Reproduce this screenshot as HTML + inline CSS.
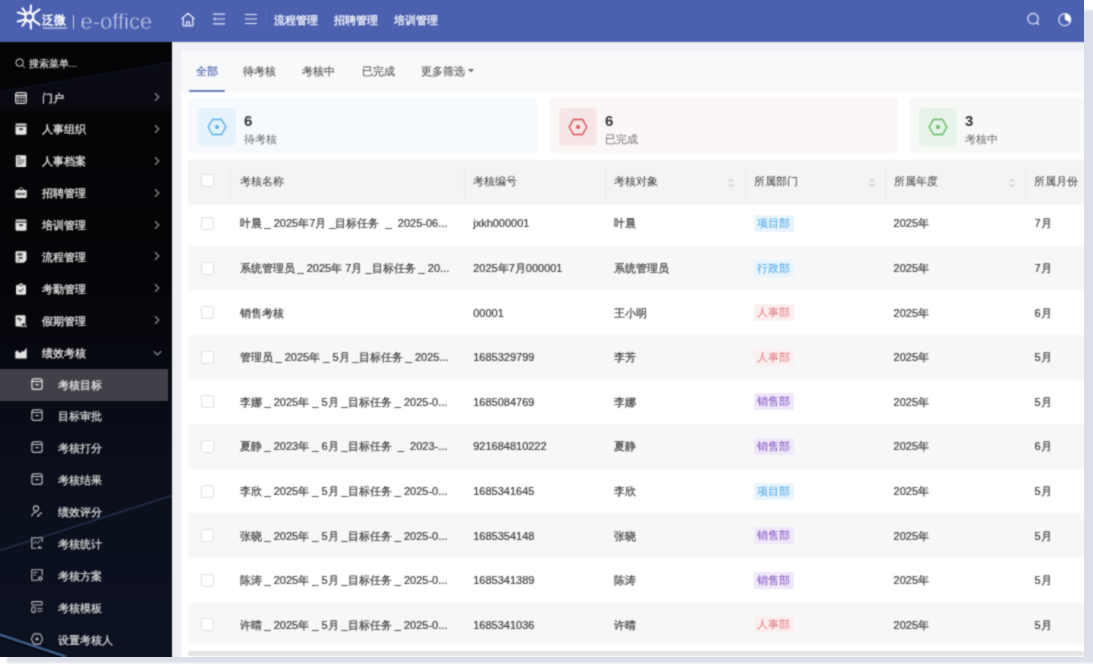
<!DOCTYPE html>
<html><head><meta charset="utf-8">
<style>
*{margin:0;padding:0;box-sizing:border-box}
html,body{width:1093px;height:666px;overflow:hidden;background:#fff;font-family:"Liberation Sans",sans-serif}
.abs{position:absolute}
#shadow{position:absolute;left:7px;top:10px;width:1100px;height:653px;background:#dcdfea;filter:blur(1px)}
#app{position:absolute;left:0;top:0;width:1084px;height:657px;background:#eef0f4;overflow:hidden;filter:url(#soft)}
#hdr{position:absolute;left:0;top:0;width:1084px;height:42px;background:#4b60af;color:#fff}
#side{position:absolute;left:0;top:42px;width:172px;height:615px;background:linear-gradient(180deg,#040406 0%,#050509 40%,#0b0f1c 70%,#0c1120 100%);overflow:hidden}
.nt{position:absolute;font-size:11px;font-weight:bold;color:#eef0f8;top:12px;line-height:16px}
.si{position:absolute;left:0;width:172px;height:32px}
.si .ic{position:absolute;left:15px;top:10.5px;width:12px;height:12px}
.si .tx{position:absolute;left:42px;top:8.6px;font-size:11px;line-height:16px;color:#e6e6e6;font-weight:500;-webkit-text-stroke:0.25px #e6e6e6}
.si .ch{position:absolute;left:153px;top:11px;width:8px;height:10px}
.sub .ic{left:31px;top:9.6px}
.sub .tx{left:58px}
.dim .tx{color:#dadada;-webkit-text-stroke:0.25px #dadada}
.dim .ic{opacity:0.8}
#panel{position:absolute;left:181px;top:50px;width:903px;height:607px;background:linear-gradient(180deg,#eef0f4 0,#eef0f4 1px,#fff 1px)}
#tabs{position:absolute;left:0;top:0;width:903px;height:42px;background:linear-gradient(180deg,#eef0f4 0,#eef0f4 1px,#f8f9fb 1px)}
.tab{position:absolute;top:13px;font-size:11px;line-height:16px;color:#555;font-weight:500;-webkit-text-stroke:0.15px currentColor}
.card{position:absolute;top:48px;height:55px;width:349px;border-radius:4px}
.card .ib{position:absolute;left:10px;top:10px;width:38px;height:38px;border-radius:5px}
.card .num{position:absolute;left:56px;top:14.5px;font-size:15px;font-weight:bold;color:#333;line-height:16px}
.card .lb{position:absolute;left:56px;top:33px;font-size:11px;color:#666;line-height:16px}
#thead{position:absolute;left:7px;top:110px;width:896px;height:45px;background:#f4f4f4}
.th{position:absolute;top:13.3px;font-size:11px;line-height:16px;color:#3a3a3a;font-weight:500}
.sep{position:absolute;top:6px;width:1px;height:33px;background:#eaeaea}
.srt{position:absolute;top:17.5px;width:6px;height:10px}
.row{position:absolute;left:7px;width:896px;height:44.62px;background:#fff}
.row.s{background:#f7f7f7}
.cb{position:absolute;left:13px;width:13px;height:13px;border:1px solid #e0e0e0;background:#fff;border-radius:2px}
.td{position:absolute;font-size:11px;line-height:16px;color:#3a3a3a;white-space:nowrap;font-weight:500;-webkit-text-stroke:0.2px #3a3a3a}
.tag{position:absolute;height:17px;padding:0 3.5px;font-size:11px;line-height:17px;border-radius:2px}
.t-b{color:#45a3e6;background:#e9f4fd}
.t-r{color:#e3767e;background:#fcefef}
.t-p{color:#7d4ac4;background:#efe8f9}
</style></head><body>
<svg width="0" height="0" style="position:absolute"><filter id="soft" x="0" y="0" width="100%" height="100%" color-interpolation-filters="sRGB"><feConvolveMatrix order="3" kernelMatrix="1 2 1 2 8 2 1 2 1" divisor="20" edgeMode="duplicate" preserveAlpha="false"/></filter></svg>
<div id="shadow"></div>
<div id="app">
  <div id="hdr">
    <!-- logo -->
    <svg class="abs" style="left:15px;top:3px" width="28" height="28" viewBox="0 0 28 28"><path d="M16.00 2.50 L15.60 9.30 M7.50 5.30 L11.20 10.30 M2.80 9.60 L10.00 11.60 M2.80 18.40 L10.00 16.40 M7.50 22.70 L11.20 17.70 M16.00 25.50 L15.60 18.70 M24.50 6.40 L18.60 10.60 M24.50 21.60 L18.60 17.40 M14.30 9.00 L12.50 10.88 L9.97 11.50 L10.70 14.00 L9.97 16.50 L12.50 17.12 L14.30 19.00 L16.10 17.12 L18.63 16.50 L17.90 14.00 L18.63 11.50 L16.10 10.88Z" stroke="#fff" stroke-width="2.1" fill="none" stroke-linejoin="round" stroke-linecap="round"/></svg>
    <div class="abs" style="left:42.3px;top:13.8px;font-size:12.2px;font-weight:bold;line-height:13px;color:#fff;letter-spacing:0.2px">泛微</div>
    <div class="abs" style="left:42.5px;top:27.3px;width:24px;height:1.6px;background:rgba(255,255,255,0.45)"></div>
    <div class="abs" style="left:73px;top:15px;width:1.2px;height:14px;background:#c9d0ec"></div>
    <div class="abs" style="left:80.5px;top:10.4px;font-size:22px;line-height:24px;color:#e4e8f7;letter-spacing:0;-webkit-text-stroke:0.75px #4b60af">e-office</div>
    <!-- icons -->
    <svg class="abs" style="left:180px;top:12px" width="16" height="15" viewBox="0 0 16 15">
      <path d="M1.5 7 L8 1.2 L14.5 7 M3.2 5.8 V13.8 H12.8 V5.8 M6.5 13.8 V10 H9.5 V13.8" stroke="#e6e9f6" stroke-width="1.3" fill="none" stroke-linejoin="round"/>
    </svg>
    <svg class="abs" style="left:212px;top:13px" width="14" height="12" viewBox="0 0 14 12">
      <path d="M1 1.2 H13 M4.5 6 H13 M1 10.8 H13" stroke="#e6e9f6" stroke-width="1.2"/>
      <path d="M1 6 L3.5 4 V8 Z" fill="#e6e9f6"/>
    </svg>
    <svg class="abs" style="left:244px;top:13px" width="14" height="12" viewBox="0 0 14 12">
      <path d="M1 1.5 H13 M1 6 H13 M1 10.5 H13" stroke="#e6e9f6" stroke-width="1.2"/>
    </svg>
    <div class="abs" style="left:266px;top:8px;width:1px;height:22px;background:#5668b4"></div>
    <div class="nt" style="left:274px">流程管理</div>
    <div class="nt" style="left:334px">招聘管理</div>
    <div class="nt" style="left:394px">培训管理</div>
    <svg class="abs" style="left:1026px;top:12px" width="15" height="15" viewBox="0 0 15 15">
      <circle cx="7" cy="6.7" r="5.2" stroke="#d9def2" stroke-width="1.3" fill="none"/>
      <path d="M10.6 10.4 L13 12.8" stroke="#d9def2" stroke-width="1.5"/>
    </svg>
    <svg class="abs" style="left:1057px;top:12px" width="16" height="16" viewBox="0 0 16 16">
      <circle cx="7.8" cy="7.6" r="6" stroke="#d9def2" stroke-width="1.3" fill="none"/>
      <path d="M7.8 1.6 A6 6 0 0 1 13 10.6 L7.8 7.6 Z" fill="#fff"/>
    </svg>
  </div>

  <div id="side">
<svg class="abs" style="left:0;top:0" width="172" height="615" viewBox="0 0 172 615"><defs><linearGradient id="bandg" x1="0" y1="0" x2="0" y2="1"><stop offset="0" stop-color="#0a0b14"/><stop offset="0.85" stop-color="#090a12"/><stop offset="1" stop-color="#060609"/></linearGradient></defs><path d="M0 50 L172 20 V71 H0Z" fill="url(#bandg)"/><path d="M0 50 L172 20" stroke="#111627" stroke-width="1"/><path d="M0 508.5 L172 453.5" stroke="#202c46" stroke-width="1.8"/><path d="M0 595 L66 617" stroke="#05070d" stroke-width="2"/><path d="M0 592.7 L66 614.7" stroke="#3c5e8d" stroke-width="2.5"/></svg>
<div class="abs" style="left:0;top:327px;width:168px;height:32px;background:#404148"></div>
<svg class="abs" style="left:14.5px;top:16px" width="11" height="11" viewBox="0 0 11 11"><circle cx="4.6" cy="4.6" r="3.7" stroke="#ddd" stroke-width="1" fill="none"/><path d="M7.3 7.3 L9.8 9.8" stroke="#ddd" stroke-width="1"/></svg>
<div class="abs" style="left:29px;top:14.5px;font-size:9.5px;line-height:14px;color:#e6e6e6;font-weight:500;-webkit-text-stroke:0.12px #e6e6e6">搜索菜单...</div>
<div class="si" style="top:39.00px"><svg class="ic" viewBox="0 0 12 12"><rect x="0.7" y="0.7" width="10.6" height="10.6" rx="1.5" stroke="#e4e4e4" stroke-width="1.3" fill="none"/><path d="M0.7 3.5 H11.3" stroke="#e4e4e4" stroke-width="1.6"/><g fill="#e4e4e4"><rect x="2.3" y="5" width="1.8" height="1.6"/><rect x="5.1" y="5" width="1.8" height="1.6"/><rect x="7.9" y="5" width="1.8" height="1.6"/><rect x="2.3" y="7.8" width="1.8" height="1.6"/><rect x="5.1" y="7.8" width="1.8" height="1.6"/><rect x="7.9" y="7.8" width="1.8" height="1.6"/></g></svg><div class="tx">门户</div><svg class="ch" viewBox="0 0 8 10"><path d="M2 1.2 L5.8 5 L2 8.8" stroke="#8a8a8a" stroke-width="1.3" fill="none"/></svg></div>
<div class="si" style="top:70.88px"><svg class="ic" viewBox="0 0 12 12"><path d="M1.5 0.5 H10.5 A1 1 0 0 1 11.5 1.5 V10.5 A1.2 1.2 0 0 1 10.3 11.7 H1.7 A1.2 1.2 0 0 1 0.5 10.5 V1.5 A1 1 0 0 1 1.5 0.5Z" fill="#e4e4e4"/><path d="M0.5 3 H11.5" stroke="#050508" stroke-width="1"/><rect x="4" y="5.5" width="4" height="1.3" fill="#050508"/></svg><div class="tx">人事组织</div><svg class="ch" viewBox="0 0 8 10"><path d="M2 1.2 L5.8 5 L2 8.8" stroke="#8a8a8a" stroke-width="1.3" fill="none"/></svg></div>
<div class="si" style="top:102.76px"><svg class="ic" viewBox="0 0 12 12"><rect x="0.8" y="0.3" width="10.4" height="11.6" rx="1" fill="#e4e4e4"/><g fill="#555"><rect x="2.3" y="2" width="3" height="1.2"/><rect x="2.3" y="4.5" width="7" height="0.9"/><rect x="2.3" y="6.5" width="7" height="0.9"/><rect x="2.3" y="8.5" width="5" height="0.9"/></g></svg><div class="tx">人事档案</div><svg class="ch" viewBox="0 0 8 10"><path d="M2 1.2 L5.8 5 L2 8.8" stroke="#8a8a8a" stroke-width="1.3" fill="none"/></svg></div>
<div class="si" style="top:134.64px"><svg class="ic" viewBox="0 0 12 12"><path d="M3 3 L6 0.5 L9 3" stroke="#e4e4e4" stroke-width="0.8" fill="none"/><rect x="0.3" y="3" width="11.4" height="8" rx="1" fill="#e4e4e4"/><rect x="1.8" y="5.8" width="8.4" height="2.4" fill="#777"/></svg><div class="tx">招聘管理</div><svg class="ch" viewBox="0 0 8 10"><path d="M2 1.2 L5.8 5 L2 8.8" stroke="#8a8a8a" stroke-width="1.3" fill="none"/></svg></div>
<div class="si" style="top:166.52px"><svg class="ic" viewBox="0 0 12 12"><path d="M1.5 0.5 H10.5 A1 1 0 0 1 11.5 1.5 V10.5 A1.2 1.2 0 0 1 10.3 11.7 H1.7 A1.2 1.2 0 0 1 0.5 10.5 V1.5 A1 1 0 0 1 1.5 0.5Z" fill="#e4e4e4"/><path d="M0.5 3 H11.5" stroke="#050508" stroke-width="1"/><rect x="4" y="5.5" width="4" height="1.3" fill="#050508"/></svg><div class="tx">培训管理</div><svg class="ch" viewBox="0 0 8 10"><path d="M2 1.2 L5.8 5 L2 8.8" stroke="#8a8a8a" stroke-width="1.3" fill="none"/></svg></div>
<div class="si" style="top:198.40px"><svg class="ic" viewBox="0 0 12 12"><path d="M1.5 0.3 H10.5 A1 1 0 0 1 11.5 1.3 V9 L9 11.8 H1.5 A1 1 0 0 1 0.5 10.8 V1.3 A1 1 0 0 1 1.5 0.3Z" fill="#e4e4e4"/><g fill="#555"><rect x="2.5" y="2.2" width="5" height="2.5"/><rect x="3.5" y="6" width="4" height="2"/><rect x="2.5" y="9" width="2" height="1"/></g></svg><div class="tx">流程管理</div><svg class="ch" viewBox="0 0 8 10"><path d="M2 1.2 L5.8 5 L2 8.8" stroke="#8a8a8a" stroke-width="1.3" fill="none"/></svg></div>
<div class="si" style="top:230.28px"><svg class="ic" viewBox="0 0 12 12"><rect x="1" y="1.8" width="10" height="10" rx="1.5" fill="#e4e4e4"/><rect x="3.8" y="0.3" width="4.4" height="2.4" rx="1" fill="#e4e4e4" stroke="#050508" stroke-width="0.6"/><path d="M3.5 7 L5.3 8.7 L8.5 5.5" stroke="#666" stroke-width="1.1" fill="none"/></svg><div class="tx">考勤管理</div><svg class="ch" viewBox="0 0 8 10"><path d="M2 1.2 L5.8 5 L2 8.8" stroke="#8a8a8a" stroke-width="1.3" fill="none"/></svg></div>
<div class="si" style="top:262.16px"><svg class="ic" viewBox="0 0 12 12"><rect x="0.5" y="0.3" width="10" height="11.2" rx="1" fill="#e4e4e4"/><path d="M2 3.5 L7 4.5 M3.5 2.3 L5.5 5.3 L4 6.5" stroke="#333" stroke-width="1" fill="none"/><path d="M6.5 12 V9.8 A2 2 0 0 1 10.5 9.8 V12Z" fill="#050508"/><path d="M7 12 V10 A1.6 1.6 0 0 1 10.2 10 V12" stroke="#e4e4e4" stroke-width="0.8" fill="none"/><rect x="6" y="11.2" width="6" height="0.8" fill="#e4e4e4"/></svg><div class="tx">假期管理</div><svg class="ch" viewBox="0 0 8 10"><path d="M2 1.2 L5.8 5 L2 8.8" stroke="#8a8a8a" stroke-width="1.3" fill="none"/></svg></div>
<div class="si" style="top:294.04px"><svg class="ic" viewBox="0 0 12 12"><path d="M0.3 11.5 V4.8 L2.5 3.2 L4 5.5 L5.5 5.8 L7.5 3.5 L8.5 5 L10.5 2 L11.7 1 V11.5Z" fill="#e4e4e4"/></svg><div class="tx">绩效考核</div><svg class="ch" style="top:13px;width:9px;height:8px" viewBox="0 0 9 8"><path d="M0.8 2.2 L4.5 5.9 L8.2 2.2" stroke="#8a8a8a" stroke-width="1.3" fill="none"/></svg></div>
<div class="si sub" style="top:325.92px"><svg class="ic" viewBox="0 0 12 12"><rect x="0.9" y="0.9" width="10.2" height="10.4" rx="2" stroke="#e4e4e4" stroke-width="1.2" fill="none"/><path d="M0.9 3.5 H11.1" stroke="#e4e4e4" stroke-width="1.1"/><path d="M4.2 6.6 H7.8" stroke="#e4e4e4" stroke-width="1.2"/></svg><div class="tx">考核目标</div></div>
<div class="si sub dim" style="top:357.80px"><svg class="ic" viewBox="0 0 12 12"><rect x="0.9" y="0.9" width="10.2" height="10.4" rx="2" stroke="#e4e4e4" stroke-width="1.2" fill="none"/><path d="M0.9 3.5 H11.1" stroke="#e4e4e4" stroke-width="1.1"/><path d="M4.2 6.6 H7.8" stroke="#e4e4e4" stroke-width="1.2"/></svg><div class="tx">目标审批</div></div>
<div class="si sub dim" style="top:389.68px"><svg class="ic" viewBox="0 0 12 12"><rect x="0.9" y="0.9" width="10.2" height="10.4" rx="2" stroke="#e4e4e4" stroke-width="1.2" fill="none"/><path d="M0.9 3.5 H11.1" stroke="#e4e4e4" stroke-width="1.1"/><path d="M4.2 6.6 H7.8" stroke="#e4e4e4" stroke-width="1.2"/></svg><div class="tx">考核打分</div></div>
<div class="si sub dim" style="top:421.56px"><svg class="ic" viewBox="0 0 12 12"><rect x="0.9" y="0.9" width="10.2" height="10.4" rx="2" stroke="#e4e4e4" stroke-width="1.2" fill="none"/><path d="M0.9 3.5 H11.1" stroke="#e4e4e4" stroke-width="1.1"/><path d="M4.2 6.6 H7.8" stroke="#e4e4e4" stroke-width="1.2"/></svg><div class="tx">考核结果</div></div>
<div class="si sub dim" style="top:453.44px"><svg class="ic" viewBox="0 0 12 12"><circle cx="5" cy="3.5" r="2.6" stroke="#e4e4e4" stroke-width="1.1" fill="none"/><path d="M0.8 11.5 A4.5 4.5 0 0 1 5.5 7.2" stroke="#e4e4e4" stroke-width="1.1" fill="none"/><path d="M6.5 11 L10.8 7.5 M6.2 11.5 L8 11" stroke="#e4e4e4" stroke-width="1.3" fill="none"/></svg><div class="tx">绩效评分</div></div>
<div class="si sub dim" style="top:485.32px"><svg class="ic" viewBox="0 0 12 12"><path d="M11.2 5 V0.8 H0.8 V11.2 H5" stroke="#e4e4e4" stroke-width="1.1" fill="none"/><path d="M2.5 7 L4.5 4.5 L6.5 6.5 L9.5 3" stroke="#e4e4e4" stroke-width="1" fill="none"/><path d="M6 11.5 L8 9 L10 10 L11.5 11.5Z" fill="#e4e4e4"/></svg><div class="tx">考核统计</div></div>
<div class="si sub dim" style="top:517.20px"><svg class="ic" viewBox="0 0 12 12"><path d="M7 11.2 H0.8 V0.8 H11.2 V6.5" stroke="#e4e4e4" stroke-width="1.1" fill="none"/><path d="M2.5 3.5 H6.5 M2.5 6 H5" stroke="#e4e4e4" stroke-width="1"/><circle cx="9.3" cy="9.5" r="2.3" fill="#e4e4e4"/><circle cx="9.3" cy="9.5" r="0.9" fill="#0b0f1c"/></svg><div class="tx">考核方案</div></div>
<div class="si sub dim" style="top:549.08px"><svg class="ic" viewBox="0 0 12 12"><rect x="0.8" y="0.6" width="10.4" height="3.4" rx="1" stroke="#e4e4e4" stroke-width="1.1" fill="none"/><rect x="0.8" y="6" width="3.4" height="5.4" rx="1" stroke="#e4e4e4" stroke-width="1.1" fill="none"/><path d="M6.2 7.6 H11.5 M6.2 10.2 H11.5" stroke="#e4e4e4" stroke-width="1"/></svg><div class="tx">考核模板</div></div>
<div class="si sub dim" style="top:580.96px"><svg class="ic" viewBox="0 0 12 12"><path d="M3.1 0.8 H8.9 L11.8 6 L8.9 11.2 H3.1 L0.2 6Z" stroke="#e4e4e4" stroke-width="1.2" fill="none"/><circle cx="6" cy="6" r="1.6" fill="#e4e4e4"/></svg><div class="tx">设置考核人</div></div>
</div>
<div id="panel">
<div id="tabs">
<div class="tab" style="left:15px;color:#4a5eae">全部</div>
<div class="tab" style="left:62px;color:#555">待考核</div>
<div class="tab" style="left:121px;color:#555">考核中</div>
<div class="tab" style="left:180.5px;color:#555">已完成</div>
<div class="tab" style="left:239.5px;color:#555">更多筛选</div>
<svg class="abs" style="left:287px;top:19px" width="6" height="4" viewBox="0 0 6 4"><path d="M0 0 H6 L3 3.2Z" fill="#666"/></svg>
<div class="abs" style="left:8px;top:40px;width:36px;height:2px;background:#6b7cc0;border-radius:1px"></div>
</div>
<div class="card" style="left:7px;background:#f6f9fe"><div class="ib" style="background:#e6f2fb"></div><svg class="abs" style="left:19px;top:20px" width="20" height="18" viewBox="0 0 20 18"><path d="M5.5 1.5 H14.5 L18.8 9 L14.5 16.5 H5.5 L1.2 9Z" stroke="#52acea" stroke-width="1.3" fill="none"/><circle cx="10" cy="9" r="1.9" fill="#52acea"/></svg><div class="num">6</div><div class="lb">待考核</div></div>
<div class="card" style="left:368px;background:#fbf7f7"><div class="ib" style="background:#f7e6e7"></div><svg class="abs" style="left:19px;top:20px" width="20" height="18" viewBox="0 0 20 18"><path d="M5.5 1.5 H14.5 L18.8 9 L14.5 16.5 H5.5 L1.2 9Z" stroke="#dc4a52" stroke-width="1.3" fill="none"/><circle cx="10" cy="9" r="1.9" fill="#dc4a52"/></svg><div class="num">6</div><div class="lb">已完成</div></div>
<div class="card" style="left:728px;background:#f7f9f7"><div class="ib" style="background:#e7f3e9"></div><svg class="abs" style="left:19px;top:20px" width="20" height="18" viewBox="0 0 20 18"><path d="M5.5 1.5 H14.5 L18.8 9 L14.5 16.5 H5.5 L1.2 9Z" stroke="#5cb860" stroke-width="1.3" fill="none"/><circle cx="10" cy="9" r="1.9" fill="#5cb860"/></svg><div class="num">3</div><div class="lb">考核中</div></div>
<div id="thead">
<div class="cb" style="top:14px"></div>
<div class="th" style="left:51.5px">考核名称</div>
<div class="th" style="left:285.2px">考核编号</div>
<div class="th" style="left:425.7px">考核对象</div>
<div class="th" style="left:566.0px">所属部门</div>
<div class="th" style="left:706.0px">所属年度</div>
<div class="th" style="left:846.4px">所属月份</div>
<div class="sep" style="left:42.3px"></div>
<div class="sep" style="left:276.2px"></div>
<div class="sep" style="left:416.6px"></div>
<div class="sep" style="left:557.0px"></div>
<div class="sep" style="left:697.0px"></div>
<div class="sep" style="left:837.0px"></div>
<svg class="srt" style="left:540.0px" viewBox="0 0 6 10"><path d="M0.8 3.8 L3 1.3 L5.2 3.8 M0.8 6.2 L3 8.7 L5.2 6.2" stroke="#b0b0b0" stroke-width="1" fill="none"/></svg>
<svg class="srt" style="left:680.5px" viewBox="0 0 6 10"><path d="M0.8 3.8 L3 1.3 L5.2 3.8 M0.8 6.2 L3 8.7 L5.2 6.2" stroke="#b0b0b0" stroke-width="1" fill="none"/></svg>
<svg class="srt" style="left:820.9px" viewBox="0 0 6 10"><path d="M0.8 3.8 L3 1.3 L5.2 3.8 M0.8 6.2 L3 8.7 L5.2 6.2" stroke="#b0b0b0" stroke-width="1" fill="none"/></svg>
</div>
<div class="row " style="top:155.00px;height:40.70px">
<div class="cb" style="top:11.90px"></div>
<div class="td" style="left:51.5px;top:10.40px">叶晨 _ 2025年7月 _目标任务 &nbsp;_ &nbsp;2025-06...</div>
<div class="td" style="left:285.2px;top:10.40px">jxkh000001</div>
<div class="td" style="left:425.7px;top:10.40px">叶晨</div>
<div class="td" style="left:705.6px;top:10.40px">2025年</div>
<div class="td" style="left:846.4px;top:10.40px">7月</div>
<div class="tag t-b" style="left:565.8px;top:9.90px">项目部</div>
</div>
<div class="row s" style="top:195.71px;height:44.62px">
<div class="cb" style="top:15.81px"></div>
<div class="td" style="left:51.5px;top:14.31px">系统管理员 _ 2025年 7月 _目标任务 _ 20...</div>
<div class="td" style="left:285.2px;top:14.31px">2025年7月000001</div>
<div class="td" style="left:425.7px;top:14.31px">系统管理员</div>
<div class="td" style="left:705.6px;top:14.31px">2025年</div>
<div class="td" style="left:846.4px;top:14.31px">7月</div>
<div class="tag t-b" style="left:565.8px;top:13.81px">行政部</div>
</div>
<div class="row " style="top:240.33px;height:44.62px">
<div class="cb" style="top:15.81px"></div>
<div class="td" style="left:51.5px;top:14.31px">销售考核</div>
<div class="td" style="left:285.2px;top:14.31px">00001</div>
<div class="td" style="left:425.7px;top:14.31px">王小明</div>
<div class="td" style="left:705.6px;top:14.31px">2025年</div>
<div class="td" style="left:846.4px;top:14.31px">6月</div>
<div class="tag t-r" style="left:565.8px;top:13.81px">人事部</div>
</div>
<div class="row s" style="top:284.95px;height:44.62px">
<div class="cb" style="top:15.81px"></div>
<div class="td" style="left:51.5px;top:14.31px">管理员 _ 2025年 _ 5月 _目标任务 _ 2025...</div>
<div class="td" style="left:285.2px;top:14.31px">1685329799</div>
<div class="td" style="left:425.7px;top:14.31px">李芳</div>
<div class="td" style="left:705.6px;top:14.31px">2025年</div>
<div class="td" style="left:846.4px;top:14.31px">5月</div>
<div class="tag t-r" style="left:565.8px;top:13.81px">人事部</div>
</div>
<div class="row " style="top:329.57px;height:44.62px">
<div class="cb" style="top:15.81px"></div>
<div class="td" style="left:51.5px;top:14.31px">李娜 _ 2025年 _ 5月 _目标任务 _ 2025-0...</div>
<div class="td" style="left:285.2px;top:14.31px">1685084769</div>
<div class="td" style="left:425.7px;top:14.31px">李娜</div>
<div class="td" style="left:705.6px;top:14.31px">2025年</div>
<div class="td" style="left:846.4px;top:14.31px">5月</div>
<div class="tag t-p" style="left:565.8px;top:13.81px">销售部</div>
</div>
<div class="row s" style="top:374.19px;height:44.62px">
<div class="cb" style="top:15.81px"></div>
<div class="td" style="left:51.5px;top:14.31px">夏静 _ 2023年 _ 6月 _目标任务 &nbsp;_ &nbsp;2023-...</div>
<div class="td" style="left:285.2px;top:14.31px">921684810222</div>
<div class="td" style="left:425.7px;top:14.31px">夏静</div>
<div class="td" style="left:705.6px;top:14.31px">2025年</div>
<div class="td" style="left:846.4px;top:14.31px">6月</div>
<div class="tag t-p" style="left:565.8px;top:13.81px">销售部</div>
</div>
<div class="row " style="top:418.81px;height:44.62px">
<div class="cb" style="top:15.81px"></div>
<div class="td" style="left:51.5px;top:14.31px">李欣 _ 2025年 _ 5月 _目标任务 _ 2025-0...</div>
<div class="td" style="left:285.2px;top:14.31px">1685341645</div>
<div class="td" style="left:425.7px;top:14.31px">李欣</div>
<div class="td" style="left:705.6px;top:14.31px">2025年</div>
<div class="td" style="left:846.4px;top:14.31px">5月</div>
<div class="tag t-b" style="left:565.8px;top:13.81px">项目部</div>
</div>
<div class="row s" style="top:463.43px;height:44.62px">
<div class="cb" style="top:15.81px"></div>
<div class="td" style="left:51.5px;top:14.31px">张晓 _ 2025年 _ 5月 _目标任务 _ 2025-0...</div>
<div class="td" style="left:285.2px;top:14.31px">1685354148</div>
<div class="td" style="left:425.7px;top:14.31px">张晓</div>
<div class="td" style="left:705.6px;top:14.31px">2025年</div>
<div class="td" style="left:846.4px;top:14.31px">5月</div>
<div class="tag t-p" style="left:565.8px;top:13.81px">销售部</div>
</div>
<div class="row " style="top:508.05px;height:44.62px">
<div class="cb" style="top:15.81px"></div>
<div class="td" style="left:51.5px;top:14.31px">陈涛 _ 2025年 _ 5月 _目标任务 _ 2025-0...</div>
<div class="td" style="left:285.2px;top:14.31px">1685341389</div>
<div class="td" style="left:425.7px;top:14.31px">陈涛</div>
<div class="td" style="left:705.6px;top:14.31px">2025年</div>
<div class="td" style="left:846.4px;top:14.31px">5月</div>
<div class="tag t-p" style="left:565.8px;top:13.81px">销售部</div>
</div>
<div class="row s" style="top:552.67px;height:41.13px">
<div class="cb" style="top:15.81px"></div>
<div class="td" style="left:51.5px;top:14.31px">许晴 _ 2025年 _ 5月 _目标任务 _ 2025-0...</div>
<div class="td" style="left:285.2px;top:14.31px">1685341036</div>
<div class="td" style="left:425.7px;top:14.31px">许晴</div>
<div class="td" style="left:705.6px;top:14.31px">2025年</div>
<div class="td" style="left:846.4px;top:14.31px">5月</div>
<div class="tag t-r" style="left:565.8px;top:13.81px">人事部</div>
</div>
<div class="abs" style="left:7px;top:601px;width:896px;height:4.5px;background:#e4e4e4;border-radius:3px"></div>
</div>
</div>
</body></html>
